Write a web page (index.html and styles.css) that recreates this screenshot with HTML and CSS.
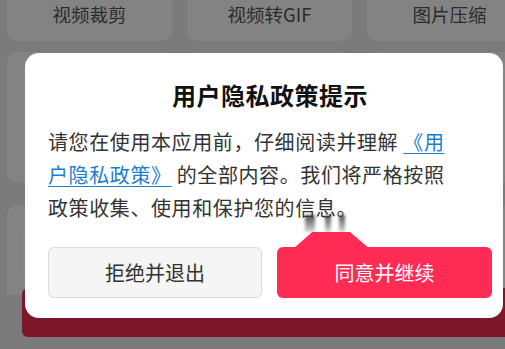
FILE: index.html
```html
<!DOCTYPE html>
<html lang="zh">
<head>
<meta charset="utf-8">
<link rel="stylesheet" href="styles.css">
</head>
<body>
<div class="page">
  <div class="bg">
    <div class="row row1">
      <div class="card">视频裁剪</div>
      <div class="card">视频转GIF</div>
      <div class="card">图片压缩</div>
    </div>
    <div class="row row2">
      <div class="card tall"></div>
      <div class="card tall"></div>
      <div class="card tall"></div>
    </div>
    <div class="row row3">
      <div class="card low"><div class="inner"></div></div>
      <div class="card low"></div>
      <div class="card low"></div>
    </div>
    <div class="redbar"></div>
  </div>

  <div class="dialog">
    <h1 class="title">用户隐私政策提示</h1>
    <p class="body">请您在使用本应用前，仔细阅读并理解 <a class="link">《用户隐私政策》</a> 的全部内容。我们将严格按照政策收集、使用和保护您的信息。</p>
    <div class="actions">
      <button class="btn reject">拒绝并退出</button>
      <button class="btn agree">同意并继续</button>
    </div>
    <div class="glitch">
      <span class="streak s1"></span>
      <span class="streak s2"></span>
      <span class="streak s3"></span>
      <span class="trap"></span>
    </div>
  </div>
</div>
</body>
</html>
```

FILE: styles.css
```css
* { box-sizing: border-box; }
html, body {
  margin: 0;
  padding: 0;
  width: 505px;
  height: 349px;
  overflow: hidden;
  background: #7b7b7b;
  font-family: "Noto Sans CJK SC", "Noto Sans", sans-serif;
}
.page {
  position: relative;
  width: 505px;
  height: 349px;
  overflow: hidden;
}
.bg {
  display: flex;
  flex-direction: column;
  padding-left: 7px;
}
.row {
  display: grid;
  grid-template-columns: 165px 165px 165px;
  column-gap: 15px;
}
.card {
  background: #838383;
  border-radius: 10px;
  color: #2b2b2b;
  font-size: 18.5px;
  display: flex;
  align-items: flex-end;
  justify-content: center;
}
.row1 { margin-top: -20px; }
.row1 .card {
  height: 61px;
  padding-bottom: 15px;
  line-height: 24px;
}
.row2 { margin-top: 11px; }
.tall { height: 130px; }
.row3 { margin-top: 23px; }
.low {
  height: 90px;
  border-radius: 10px 10px 0 0;
  align-items: flex-start;
  justify-content: flex-start;
}
.inner {
  margin-top: 23px;
  margin-left: 15px;
  width: 60px;
  height: 44px;
  border-left: 1px solid #888888;
  border-top: 1px solid #818181;
}
.redbar {
  margin-left: 15px;
  margin-top: -7px;
  width: 500px;
  height: 49px;
  background: #7c1729;
  border-radius: 6px;
}

.dialog {
  position: absolute;
  left: 25px;
  top: 53px;
  width: 478px;
  height: 265px;
  background: #ffffff;
  border-radius: 14px;
  padding: 27px 11px 0 23px;
  display: flex;
  flex-direction: column;
}
.title {
  margin: 0;
  font-size: 24px;
  line-height: 30px;
  font-weight: 700;
  color: #111111;
  text-align: center;
  letter-spacing: 0.5px;
}
.body {
  margin: 15px 0 0 0;
  width: 412px;
  font-size: 20px;
  letter-spacing: 0.6px;
  line-height: 33px;
  color: #333333;
}
.link {
  color: #1b7ed3;
  text-decoration: underline;
  text-underline-offset: 3px;
  text-decoration-thickness: 1px;
}
.actions {
  margin-top: 23px;
  display: flex;
  gap: 15px;
}
.btn {
  height: 51px;
  border-radius: 6px;
  font-family: "Noto Sans CJK SC", "Noto Sans", sans-serif;
  font-size: 20px;
  padding: 0;
}
.reject {
  width: 214px;
  background: #f5f5f5;
  border: 1px solid #dcdcdc;
  color: #333333;
}
.agree {
  width: 215px;
  background: #fe2c55;
  border: none;
  color: #ffffff;
}
.glitch {
  position: absolute;
  left: 264px;
  top: 160px;
  width: 90px;
  height: 36px;
}
.trap {
  position: absolute;
  left: 4px;
  top: 19px;
  width: 77px;
  height: 17px;
  background: #fe2c55;
  clip-path: polygon(25% 0, 74% 0, 100% 100%, 0 100%);
}
.streak {
  position: absolute;
  top: 2px;
  width: 6px;
  height: 17px;
  background: linear-gradient(to bottom, rgba(60,60,60,0.9), rgba(120,120,120,0.3));
  filter: blur(1.5px);
}
.s1 { left: 16px; width: 10px; }
.s2 { left: 36px; }
.s3 { left: 50px; }
```
